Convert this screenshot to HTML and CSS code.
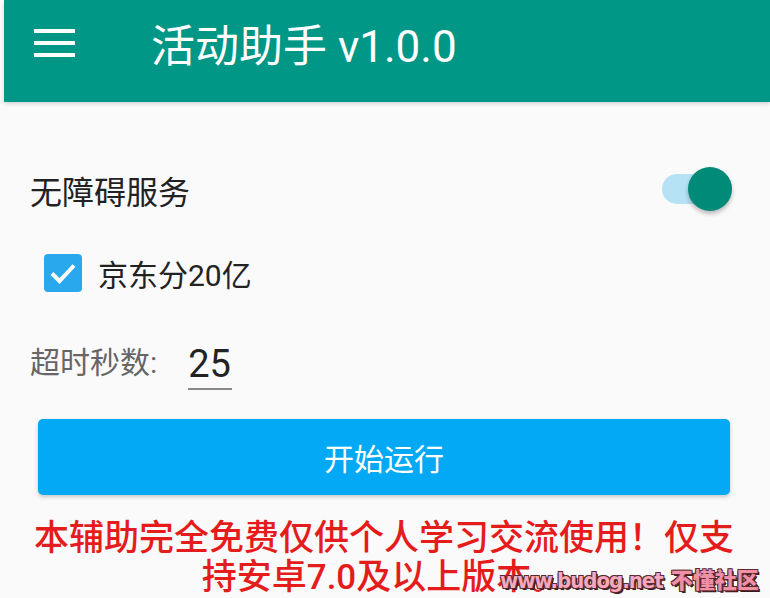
FILE: index.html
```html
<!DOCTYPE html>
<html lang="zh">
<head>
    <meta charset="UTF-8">
    <meta name="viewport" content="width=device-width, initial-scale=1.0">
    <title>活动助手 v1.0.0</title>
    <link rel="stylesheet" href="styles.css">
</head>
<body>

    <div class="toolbar">
        <div class="menu-btn">
            <span></span>
            <span></span>
            <span></span>
        </div>
        <h1 class="title">活动助手 v1.0.0</h1>
    </div>

    <div class="content">
        <div class="row switch-row">
            <span class="label">无障碍服务</span>
            <div class="switch on">
                <div class="track"></div>
                <div class="thumb"></div>
            </div>
        </div>

        <div class="row check-row">
            <div class="checkbox">
                <svg width="38" height="38" viewBox="0 0 38 38">
                    <rect x="0" y="0" width="38" height="38" rx="4" fill="#2aa8ee"/>
                    <path d="M8 19.5 L15.5 27 L30 11.5" fill="none" stroke="#fff" stroke-width="4"/>
                </svg>
            </div>
            <span class="label">京东分20亿</span>
        </div>

        <div class="row timeout-row">
            <span class="label gray">超时秒数:</span>
            <div class="num-input">25</div>
        </div>

        <button class="start-btn">开始运行</button>

        <p class="notice">本辅助完全免费仅供个人学习交流使用！仅支持安卓7.0及以上版本。</p>
    </div>

    <div class="watermark">
        <span class="wm-url">www.budog.net</span>
        <span class="wm-name">不懂社区</span>
    </div>

</body>
</html>
```

FILE: styles.css
```css
body {
    margin: 0;
    padding: 0;
    width: 770px;
    height: 598px;
    overflow: hidden;
    background-color: #fafafa;
    font-family: Roboto, "Noto Sans CJK SC", sans-serif;
    position: relative;
}
.toolbar {
    margin-left: 4px;
    height: 102px;
    background: #009787;
    display: flex;
    align-items: center;
    box-shadow: 0px 2px 4px rgba(0, 0, 0, 0.15);
}
.menu-btn {
    width: 41px;
    margin-left: 30px;
    margin-top: -16px;
    display: flex;
    flex-direction: column;
    gap: 8px;
}
.menu-btn span {
    display: block;
    height: 4px;
    background: #fff;
}
.title {
    margin: -16px 0 0 76px;
    color: #fff;
    font-size: 44px;
    font-weight: 400;
}
.content {
    padding: 0 38px 0 30px;
}
.row {
    height: 56px;
    display: flex;
    align-items: center;
}
.label {
    font-size: 32px;
    color: #222;
}
.label.gray {
    color: #666;
    font-size: 30px;
}
.switch-row {
    margin-top: 60px;
    justify-content: space-between;
}
.switch {
    position: relative;
    width: 70px;
    height: 44px;
}
.track {
    position: absolute;
    left: 0;
    top: 6px;
    width: 56px;
    height: 30px;
    border-radius: 15px;
    background: #b6e2f6;
}
.thumb {
    position: absolute;
    right: 0;
    top: -1px;
    width: 44px;
    height: 44px;
    border-radius: 50%;
    background: #008a78;
    box-shadow: 0px 3px 4px rgba(0, 0, 0, 0.25);
}
.check-row {
    margin-top: 27px;
}
.checkbox {
    margin-left: 14px;
    margin-right: 16px;
    height: 38px;
}
.check-row .label {
    font-size: 30px;
}
.timeout-row {
    margin-top: 31px;
}
.num-input {
    margin-left: 31px;
    width: 44px;
    font-size: 38px;
    color: #222;
    line-height: 48px;
    margin-top: 10px;
    border-bottom: 2px solid #888;
}
.start-btn {
    display: block;
    margin: 31px 0 0 8px;
    width: 692px;
    height: 76px;
    border: none;
    border-radius: 5px;
    background: #03a9f4;
    color: #fff;
    font-family: Roboto, "Noto Sans CJK SC", sans-serif;
    font-size: 30px;
    box-shadow: 0px 2px 4px rgba(0, 0, 0, 0.2);
}
.notice {
    margin: 24px 0 0 4px;
    width: 700px;
    text-align: center;
    color: #e51c1c;
    font-size: 35px;
    line-height: 39px;
    font-weight: 500;
}
.watermark {
    position: absolute;
    left: 500px;
    top: 565px;
    display: flex;
    align-items: center;
    gap: 8px;
    white-space: nowrap;
    font-family: "DejaVu Sans", "Noto Sans CJK SC", sans-serif;
    font-stretch: condensed;
    font-weight: bold;
    line-height: 32px;
    text-shadow: 1px 1px 0 #5a2a30, -1px -1px 0 #5a2a30, 1px -1px 0 #5a2a30, -1px 1px 0 #5a2a30, 2px 2px 0 #3a1a1a;
}
.wm-url {
    color: #f5a8be;
    font-size: 22px;
    letter-spacing: -1px;
}
.wm-name {
    color: #f08fa5;
    font-size: 22px;
    font-weight: 900;
}
```
